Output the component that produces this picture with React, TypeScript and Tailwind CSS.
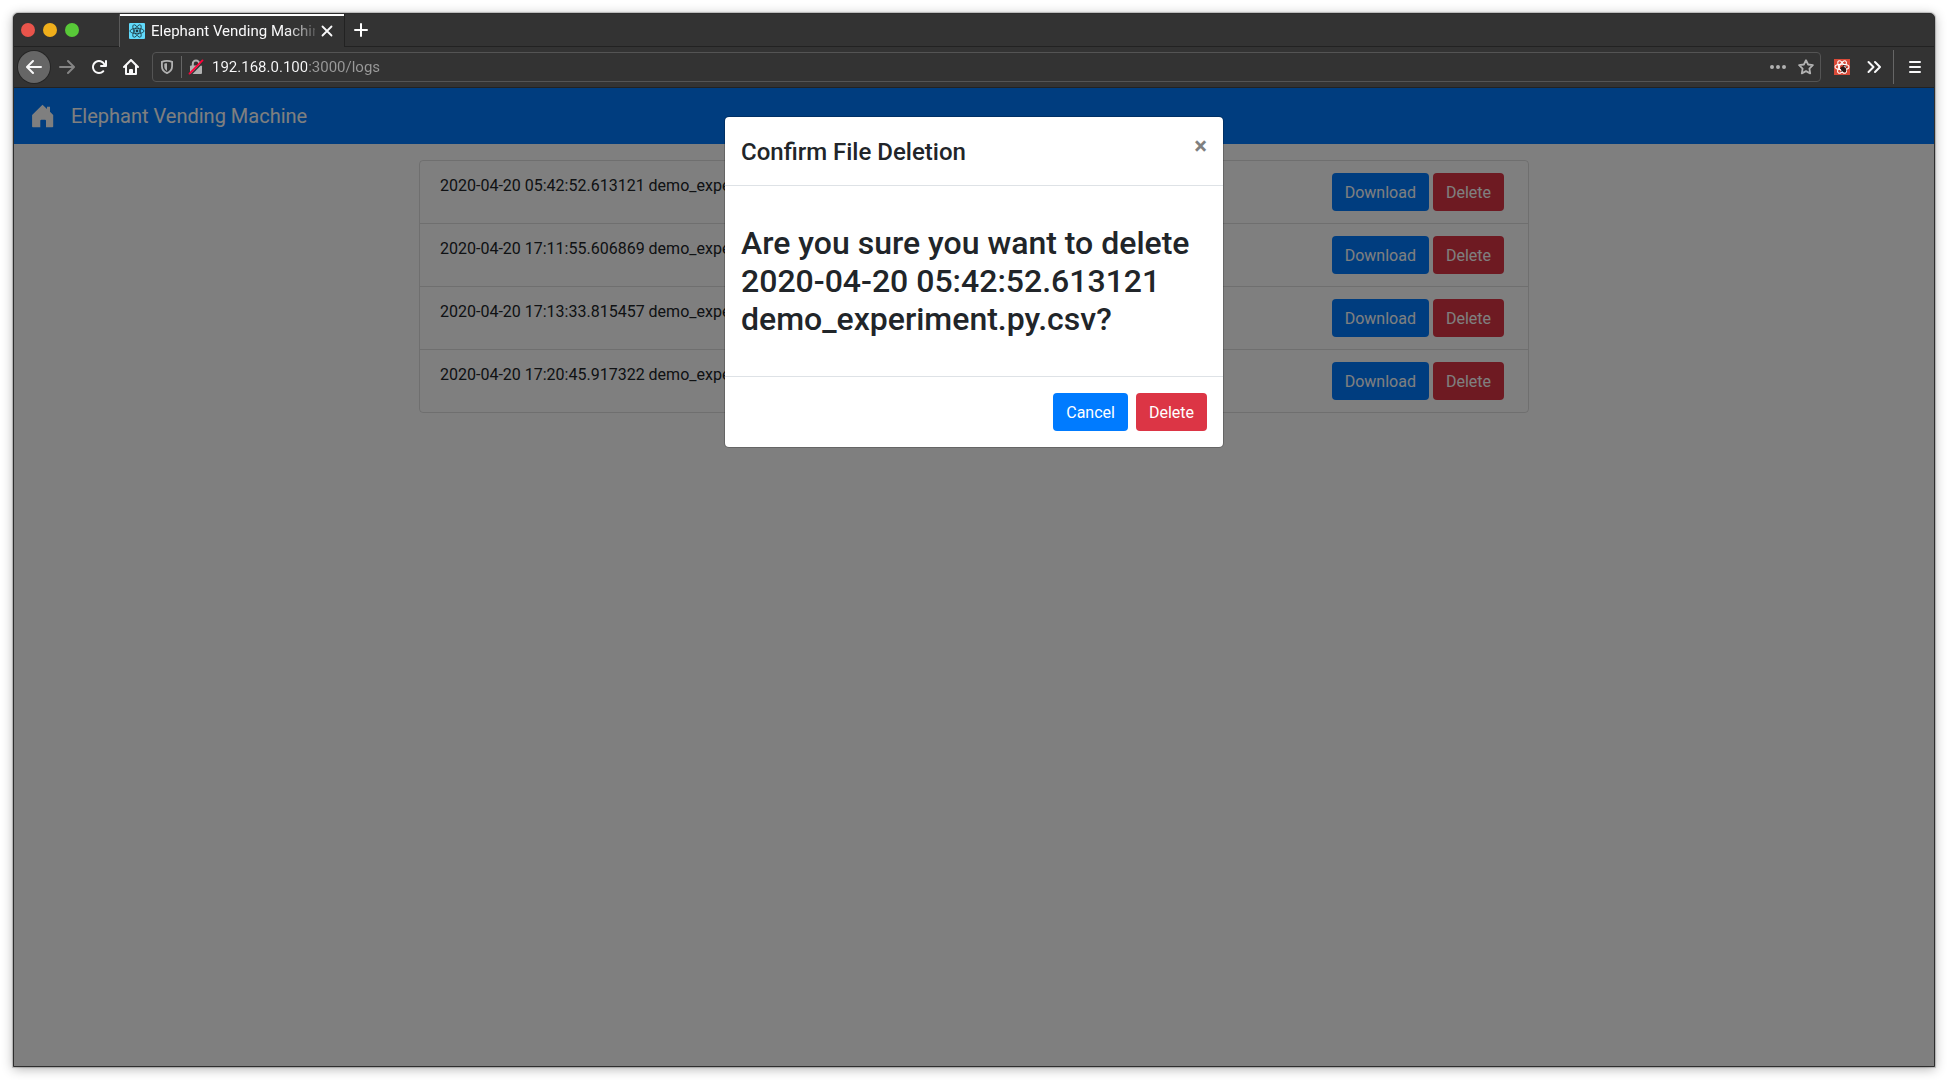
import React from "react";

const logs = [
  "2020-04-20 05:42:52.613121 demo_experiment.py.csv",
  "2020-04-20 17:11:55.606869 demo_experiment.py.csv",
  "2020-04-20 17:13:33.815457 demo_experiment.py.csv",
  "2020-04-20 17:20:45.917322 demo_experiment.py.csv",
];

function Glyph({ d, className = "" }: { d: string; className?: string }) {
  return (
    <svg viewBox="0 0 16 16" className={`size-4 shrink-0 ${className}`} fill="currentColor" aria-hidden="true">
      <path d={d} />
    </svg>
  );
}

const BACK =
  "M15 7H3.414l4.293-4.293a1 1 0 0 0-1.414-1.414l-6 6a1 1 0 0 0 0 1.414l6 6a1 1 0 0 0 1.414-1.414L3.414 9H15a1 1 0 0 0 0-2z";
const FORWARD =
  "M15.707 7.293l-6-6a1 1 0 0 0-1.414 1.414L12.586 7H1a1 1 0 0 0 0 2h11.586l-4.293 4.293a1 1 0 1 0 1.414 1.414l6-6a1 1 0 0 0 0-1.414z";
const RELOAD =
  "M15 1a1 1 0 0 0-1 1v2.418A6.995 6.995 0 1 0 8 15a6.954 6.954 0 0 0 4.95-2.05 1 1 0 0 0-1.414-1.414A5.019 5.019 0 1 1 12.549 6H10a1 1 0 0 0 0 2h5a1 1 0 0 0 1-1V2a1 1 0 0 0-1-1z";
const HOME =
  "M15.707 7.293l-7-7a1 1 0 0 0-1.414 0l-7 7a1 1 0 0 0 1.414 1.414L2 8.414V15a1 1 0 0 0 1 1h10a1 1 0 0 0 1-1V8.414l.293.293a1 1 0 0 0 1.414-1.414zM12 14h-2v-3a1 1 0 0 0-1-1H7a1 1 0 0 0-1 1v3H4V6.414l4-4 4 4z";

function AtomOrbits() {
  return (
    <>
      <ellipse cx="8" cy="8" rx="7" ry="2.7" />
      <ellipse cx="8" cy="8" rx="7" ry="2.7" transform="rotate(60 8 8)" />
      <ellipse cx="8" cy="8" rx="7" ry="2.7" transform="rotate(120 8 8)" />
    </>
  );
}

function TabStrip() {
  return (
    <div className="flex h-[33px] border-b border-[#222222]">
      <div className="flex w-[105px] shrink-0 items-center gap-2 pl-[7px]">
        <button aria-label="Close window" className="size-3.5 rounded-full bg-[#e9544b]" />
        <button aria-label="Minimize window" className="size-3.5 rounded-full bg-[#f0af1b]" />
        <button aria-label="Maximize window" className="size-3.5 rounded-full bg-[#58c938]" />
      </div>
      <div className="-mb-px flex w-[226px] shrink-0 items-center border-x border-x-[#5a5a5a] border-r-[#222222] bg-[#333333] pl-[9px] shadow-[inset_0_2px_0_#ffffff]">
        <svg viewBox="0 0 16 16" className="size-4 shrink-0" aria-hidden="true">
          <rect width="16" height="16" rx="1" fill="#61dafb" />
          <g fill="none" stroke="#1c3a44" strokeWidth="0.8">
            <AtomOrbits />
          </g>
          <circle cx="8" cy="8" r="1.4" fill="#1c3a44" />
        </svg>
        <span className="ml-1.5 w-[164px] overflow-hidden text-[15px] leading-5 whitespace-nowrap text-[#f9f9fa] [mask-image:linear-gradient(90deg,#000_136px,transparent_170px)]">
          Elephant Vending Machine
        </span>
        <button aria-label="Close tab" className="ml-1 flex size-4 items-center justify-center text-[#f9f9fa]">
          <svg viewBox="0 0 12 12" className="size-3" fill="none" stroke="currentColor" strokeWidth="1.8" strokeLinecap="round">
            <path d="M1.5 1.5l9 9M10.5 1.5l-9 9" />
          </svg>
        </button>
      </div>
      <button aria-label="New tab" className="ml-2 flex w-4 items-center justify-center text-white">
        <svg viewBox="0 0 14 14" className="size-3.5" fill="none" stroke="currentColor" strokeWidth="2" strokeLinecap="round">
          <path d="M7 1v12M1 7h12" />
        </svg>
      </button>
    </div>
  );
}

function Toolbar() {
  return (
    <div className="flex h-[41px] items-center border-b border-[#222222] text-[#f9f9fa]">
      <button aria-label="Back" className="ml-1 flex size-8 shrink-0 items-center justify-center rounded-full bg-[#666666] shadow-[0_0_0_1px_#262626]">
        <Glyph d={BACK} />
      </button>
      <button aria-label="Forward" className="ml-[9px] text-[#858585]">
        <Glyph d={FORWARD} />
      </button>
      <button aria-label="Reload" className="ml-4">
        <Glyph d={RELOAD} />
      </button>
      <button aria-label="Browser home" className="ml-4">
        <Glyph d={HOME} />
      </button>
      <div className="ml-[13px] flex h-[30px] flex-1 items-center rounded border border-[#545454] px-1.5 text-[#b1b1b1]">
        <svg viewBox="0 0 16 16" className="size-4 shrink-0" aria-hidden="true">
          <path d="M8 1.9c1.9 0 3.7.4 5.1 1v4.3c0 3.2-1.9 5.5-5.1 6.9-3.2-1.400-5.1-3.7-5.1-6.900V2.900c1.400-.6 3.200-1 5.100-1z" fill="none" stroke="currentColor" strokeWidth="1.8" />
          <path d="M8 4.300c-1 0-1.900.1-2.700.4v2.600c0 2 .9 3.500 2.700 4.600z" fill="currentColor" />
        </svg>
        <span className="ml-1.5 h-[22px] w-px bg-[#666666]" />
        <svg viewBox="0 0 16 16" className="ml-1.5 size-4 shrink-0" aria-hidden="true">
          <path d="M4.800 7V4.800a3.200 3.200 0 0 1 6.400 0V7" fill="none" stroke="currentColor" strokeWidth="2" />
          <rect x="2" y="6.500" width="12" height="8.500" rx="1" fill="currentColor" />
          <path d="M3 15.500L15 3.300" stroke="#333333" strokeWidth="1.400" />
          <path d="M1.500 14.600L14.500 1.400" stroke="#ff0039" strokeWidth="1.900" strokeLinecap="round" />
        </svg>
        <input
          aria-label="Address"
          defaultValue="192.168.0.100:3000/logs"
          className="ml-2 min-w-0 flex-1 bg-[linear-gradient(90deg,#f9f9fa_95px,#9a9a9a_95px)] bg-clip-text text-[15px] leading-5 text-transparent outline-none"
        />
        <button aria-label="Page actions">
          <Glyph d="M2 6a2 2 0 1 0 0 4 2 2 0 0 0 0-4zm6 0a2 2 0 1 0 0 4 2 2 0 0 0 0-4zm6 0a2 2 0 1 0 0 4 2 2 0 0 0 0-4z" />
        </button>
        <button aria-label="Bookmark this page" className="ml-3">
          <svg viewBox="0 0 16 16" className="size-4" fill="none" stroke="currentColor" strokeWidth="1.8" strokeLinejoin="round">
            <path d="M8 1.200l2.100 4.300 4.800.7-3.500 3.400.8 4.800L8 12.100l-4.200 2.300.8-4.800L1.100 6.200l4.800-.7z" />
          </svg>
        </button>
      </div>
      <button aria-label="React developer tools" className="ml-[13px]">
        <svg viewBox="0 0 16 16" className="size-4">
          <rect width="16" height="16" fill="#d94a38" />
          <g fill="none" stroke="#ffffff" strokeWidth="1.1">
            <AtomOrbits />
          </g>
          <ellipse cx="9.5" cy="10.3" rx="2.3" ry="3.2" fill="#2b1a18" transform="rotate(-35 9.5 10.3)" />
          <path d="M6 9l6 4M7 12.500l5.500-4M9 6.500l3 .5" stroke="#2b1a18" strokeWidth="1" />
        </svg>
      </button>
      <button aria-label="More tools" className="ml-4">
        <svg viewBox="0 0 16 16" className="size-4" fill="none" stroke="currentColor" strokeWidth="2" strokeLinecap="round" strokeLinejoin="round">
          <path d="M2.500 3l5 5-5 5M9 3l5 5-5 5" />
        </svg>
      </button>
      <span className="ml-[11px] h-[34px] w-px bg-[#666666]" />
      <button aria-label="Open menu" className="mr-[11px] ml-[13px]">
        <svg viewBox="0 0 16 16" className="size-4" fill="none" stroke="currentColor" strokeWidth="2" strokeLinecap="round">
          <path d="M3 3h10M3 8h10M3 13h10" />
        </svg>
      </button>
    </div>
  );
}

function Button({ tone, children }: { tone: "primary" | "danger"; children: React.ReactNode }) {
  const color = tone === "primary" ? "bg-[#007bff]" : "bg-[#dc3545]";
  return <button className={`rounded px-[13px] pt-2 pb-1.5 text-base leading-6 text-white ${color}`}>{children}</button>;
}

function ConfirmDialog() {
  return (
    <div className="absolute inset-0 bg-black/50 px-4 pt-7">
      <div
        role="dialog"
        aria-modal="true"
        aria-labelledby="confirm-title"
        className="mx-auto max-w-[500px] rounded-[5px] border border-black/20 bg-white bg-clip-padding"
      >
        <div className="flex items-start justify-between border-b border-[#dee2e6] px-4 pt-[17px] pb-[15px]">
          <h4 id="confirm-title" className="text-2xl leading-9 font-medium">
            Confirm File Deletion
          </h4>
          <button aria-label="Close" className="text-2xl leading-6 font-bold text-black/50">
            ×
          </button>
        </div>
        <h2 className="px-4 py-[38px] text-[32px] leading-[38px] font-medium">
          Are you sure you want to delete 2020-04-20 05:42:52.613121 demo_experiment.py.csv?
        </h2>
        <div className="flex justify-end gap-2 border-t border-[#dee2e6] p-4">
          <Button tone="primary">Cancel</Button>
          <Button tone="danger">Delete</Button>
        </div>
      </div>
    </div>
  );
}

export default function App() {
  return (
    <div className="flex min-h-screen bg-white p-[13px] font-[Roboto,sans-serif] text-[#212529]">
      <div className="flex flex-1 flex-col overflow-hidden rounded-t-[5px] border border-[#2e2e2e] bg-[#333333] shadow-[0_0_1px_1px_rgba(0,0,0,0.2),0_2px_12px_rgba(0,0,0,0.3)]">
        <TabStrip />
        <Toolbar />
        <div className="relative flex-1 bg-white">
          <nav className="flex h-14 items-center bg-[#007bff] px-4 text-white">
            <a href="#home" aria-label="Home" className="ml-0.5">
              <svg viewBox="0 0 22 24" className="h-6 w-[22px]" fill="currentColor" aria-hidden="true">
                <path d="M10.500.800L15 5V2.800h3V7.800l3.200 3.100V22.400q0 .8-.8.800H14v-6.400q0-1-1-1H9.300q-1 0-1 1v6.400H.900q-.8 0-.8-.8V10.900z" />
              </svg>
            </a>
            <a href="#home" className="ml-[17px] text-xl">
              Elephant Vending Machine
            </a>
          </nav>
          <ul className="mx-auto mt-4 max-w-[1110px] divide-y divide-black/[0.125] rounded border border-black/[0.125]">
            {logs.map((name) => (
              <li key={name} className="flex items-start justify-between px-5 py-3">
                <span className="leading-[26px]">{name}</span>
                <span className="mr-1 flex gap-1">
                  <Button tone="primary">Download</Button>
                  <Button tone="danger">Delete</Button>
                </span>
              </li>
            ))}
          </ul>
          <ConfirmDialog />
        </div>
      </div>
    </div>
  );
}
